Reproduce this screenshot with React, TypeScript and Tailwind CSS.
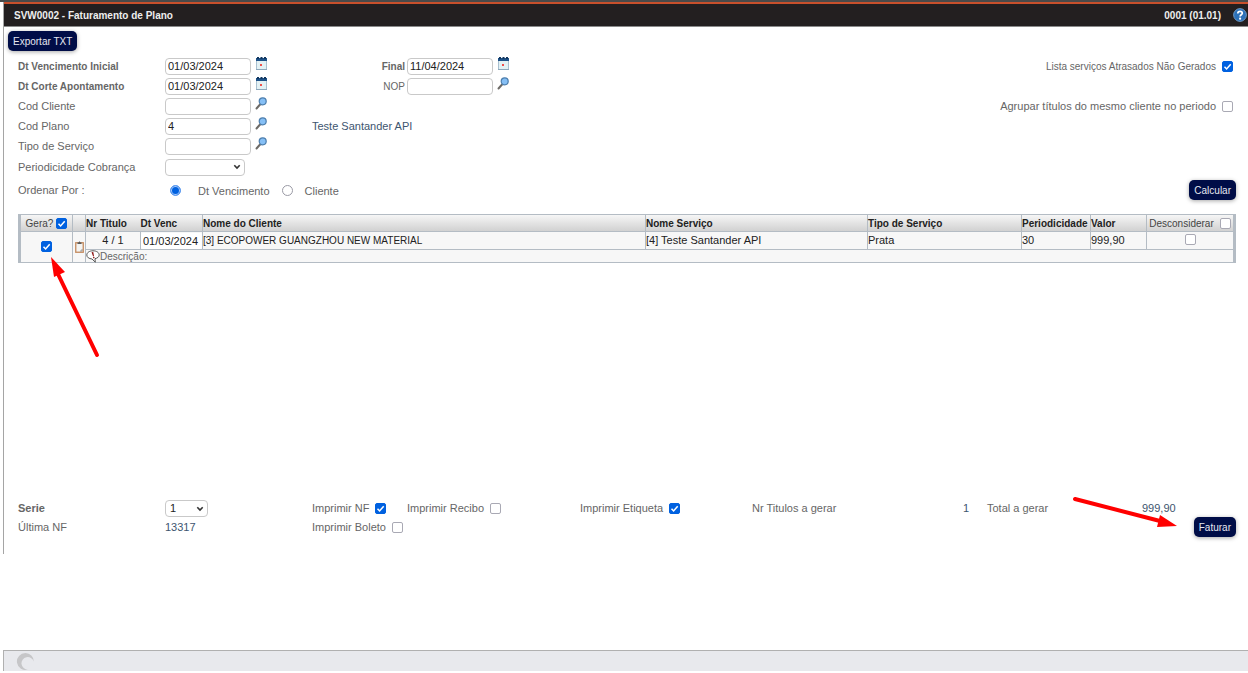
import { useState } from "react";
import type { ReactNode } from "react";

interface Titulo {
  id: string;
  numero: string;
  vencimento: string;
  cliente: string;
  servico: string;
  tipo: string;
  periodicidade: string;
  valor: string;
}

const titulos: Titulo[] = [
  {
    id: "4-1",
    numero: "4 / 1",
    vencimento: "01/03/2024",
    cliente: "[3] ECOPOWER GUANGZHOU NEW MATERIAL",
    servico: "[4] Teste Santander API",
    tipo: "Prata",
    periodicidade: "30",
    valor: "999,90",
  },
];

function CalendarIcon() {
  return (
    <svg width="13" height="14" viewBox="0 0 13 14">
      <rect x="1.500" y="2.500" width="10" height="10" fill="#e3f1f4" stroke="#a9c0d0" />
      <rect x="1" y="1" width="11" height="3" fill="#1d5086" />
      <path d="M2 0h2v2H2zM5.500 0h2v2h-2zM9 0h2v2H9z" fill="#12375f" />
      <path d="M1 12.500h11" stroke="#8da7bb" />
      <rect x="5" y="7" width="2" height="2" fill="#f0504c" />
    </svg>
  );
}

function SearchIcon() {
  return (
    <svg width="13" height="13" viewBox="0 0 13 13">
      <path d="M1.500 11.500L5.500 7" stroke="#6d6a66" strokeWidth="2" strokeLinecap="round" />
      <circle cx="7.700" cy="4.300" r="3.500" fill="#86bff5" stroke="#4d7fae" strokeWidth="1.200" />
    </svg>
  );
}

function HelpIcon() {
  return (
    <svg width="14" height="14" viewBox="0 0 14 14">
      <circle cx="7" cy="7" r="6.400" fill="#2b70b8" stroke="#7fa9d4" strokeWidth="0.800" />
      <path
        d="M4.800 5.400C4.800 2.600 9.300 2.700 9.300 5.200C9.300 6.700 7.100 6.800 7.100 8.500"
        fill="none"
        stroke="#fff"
        strokeWidth="1.700"
      />
      <circle cx="7.100" cy="10.700" r="1.100" fill="#fff" />
    </svg>
  );
}

function ClipboardIcon() {
  return (
    <svg width="9" height="12" viewBox="0 0 9 12">
      <rect x="0.750" y="1.750" width="7.500" height="9.500" fill="#f4f4f2" stroke="#c48a5e" strokeWidth="1.300" />
      <path d="M2.500 3V1.500h1L4.500 .3l1 1.200h1V3z" fill="#5a5a5a" />
      <path d="M6 11V9h2" fill="none" stroke="#888" strokeWidth="0.800" />
    </svg>
  );
}

function NoteIcon() {
  return (
    <svg width="14" height="13" viewBox="0 0 14 13">
      <path
        d="M7 .8C3.400.8.800 2.600.800 5C.800 7.300 3 8.700 6 9L9.300 12.200L9 8.700C11.500 8.100 13.200 6.800 13.200 5C13.200 2.600 10.600.8 7 .8Z"
        fill="#fff"
        stroke="#555"
        strokeWidth="1"
      />
      <path d="M5.500 2.200L7.300 2L8 6.200H7z" fill="#8e1616" />
      <circle cx="7.800" cy="7.600" r="0.800" fill="#8e1616" />
    </svg>
  );
}

function Check({ id, checked = false, label }: { id?: string; checked?: boolean; label?: string }) {
  const [on, setOn] = useState(checked);
  return (
    <span className="inline-grid size-[11px] shrink-0">
      <input
        id={id}
        type="checkbox"
        aria-label={label}
        checked={on}
        onChange={(e) => setOn(e.target.checked)}
        className="col-start-1 row-start-1 size-[11px] appearance-none rounded-xs border border-[#a9a9b4] bg-white checked:border-[#0061e0] checked:bg-[#0061e0]"
      />
      {on && (
        <svg viewBox="0 0 11 11" className="pointer-events-none col-start-1 row-start-1 size-[11px]">
          <path d="M2.500 5.700L4.600 7.900L8.700 3.200" fill="none" stroke="#fff" strokeWidth="1.500" />
        </svg>
      )}
    </span>
  );
}

function Select({ id, options, className }: { id: string; options: string[]; className: string }) {
  return (
    <span className={`inline-grid h-[17px] ${className}`}>
      <select
        id={id}
        className="col-start-1 row-start-1 h-[17px] w-full appearance-none rounded border border-[#c9c9c9] bg-white pl-1 text-[#222]"
      >
        {options.map((o) => (
          <option key={o}>{o}</option>
        ))}
      </select>
      <svg
        viewBox="0 0 8 6"
        className="pointer-events-none col-start-1 row-start-1 mr-1 h-[6px] w-2 self-center justify-self-end"
      >
        <path d="M1.300 1.200L4 4L6.700 1.200" fill="none" stroke="#333" strokeWidth="1.600" />
      </svg>
    </span>
  );
}

function Field({ id, value = "", icon }: { id: string; value?: string; icon: ReactNode }) {
  return (
    <span className="flex items-center gap-1">
      <input
        id={id}
        type="text"
        defaultValue={value}
        className="h-[17px] w-[86px] rounded border border-[#c9c9c9] bg-white px-[2px] text-[#222]"
      />
      <button type="button" aria-label="Selecionar" className="pb-[5px]">
        {icon}
      </button>
    </span>
  );
}

function Button({ children }: { children: ReactNode }) {
  return (
    <button
      type="button"
      className="h-5 rounded-[5px] bg-[#000d47] px-[5px] text-[10px] text-[#e6e8f0] shadow-[0_1px_4px_rgba(0,0,0,0.35)]"
    >
      {children}
    </button>
  );
}

const formRow = "grid h-5 grid-cols-[147px_147px_95px_1fr_auto] items-center";
const th = "border-[#b4bcc4] p-0 text-left text-[10px] font-bold";
const td = "border border-[#b4bcc4] p-0";

export default function App() {
  return (
    <main className="bg-white font-['Liberation_Sans',Arial,sans-serif] text-[11px] leading-[13px] text-[#666]">
      <div className="h-[2px] bg-[#4a4a4a]" />
      <div className="ml-[3px] border-l border-[#a5a5a5] pb-[17px]">
        <header className="flex h-[25px] items-center border-t-2 border-b border-t-[#c8502c] border-b-[#8a8a8a] bg-[#231f20] pr-px pl-[10px] text-[10px] font-bold text-[#eee]">
          <h1>SVW0002 - Faturamento de Plano</h1>
          <span className="mr-3 ml-auto">0001 (01.01)</span>
          <a href="#ajuda" aria-label="Ajuda">
            <HelpIcon />
          </a>
        </header>

        <div className="flex pt-1 pl-1">
          <Button>Exportar TXT</Button>
        </div>

        <form className="pt-[5px] pr-3 pl-[14px]">
          <div className={formRow}>
            <label htmlFor="dtIni" className="text-[10px] font-bold">Dt Vencimento Inicial</label>
            <Field id="dtIni" value="01/03/2024" icon={<CalendarIcon />} />
            <label htmlFor="dtFim" className="col-start-3 pr-[2px] text-right text-[10px] font-bold">Final</label>
            <Field id="dtFim" value="11/04/2024" icon={<CalendarIcon />} />
            <span className="flex items-center gap-[6px] pr-[3px]">
              <label htmlFor="atrasados" className="text-[10px]">Lista serviços Atrasados Não Gerados</label>
              <Check id="atrasados" checked />
            </span>
          </div>
          <div className={formRow}>
            <label htmlFor="dtCorte" className="text-[10px] font-bold">Dt Corte Apontamento</label>
            <Field id="dtCorte" value="01/03/2024" icon={<CalendarIcon />} />
            <label htmlFor="nop" className="pr-[2px] text-right text-[10px]">NOP</label>
            <Field id="nop" icon={<SearchIcon />} />
          </div>
          <div className={formRow}>
            <label htmlFor="cliente">Cod Cliente</label>
            <Field id="cliente" icon={<SearchIcon />} />
            <span className="col-start-5 flex items-center gap-[6px] pr-[3px]">
              <label htmlFor="agrupar">Agrupar títulos do mesmo cliente no periodo</label>
              <Check id="agrupar" />
            </span>
          </div>
          <div className={formRow}>
            <label htmlFor="plano">Cod Plano</label>
            <Field id="plano" value="4" icon={<SearchIcon />} />
            <output htmlFor="plano" className="whitespace-nowrap text-[#3d556f]">Teste Santander API</output>
          </div>
          <div className={formRow}>
            <label htmlFor="tipo">Tipo de Serviço</label>
            <Field id="tipo" icon={<SearchIcon />} />
          </div>
          <div className="grid h-[22px] grid-cols-[147px_1fr] items-center">
            <label htmlFor="periodicidade">Periodicidade Cobrança</label>
            <Select id="periodicidade" options={["", "Mensal", "Anual"]} className="w-20" />
          </div>
          <div className="grid h-6 grid-cols-[147px_1fr_auto] items-center">
            <span>Ordenar Por :</span>
            <div className="flex items-center pl-[5px]">
              <input
                id="ordVenc"
                type="radio"
                name="ordem"
                defaultChecked
                className="size-[11px] appearance-none rounded-full border border-[#9a9aa5] checked:border-[#5c9af0] checked:bg-[#0061e0] checked:shadow-[inset_0_0_0_1px_#a9cbfa]"
              />
              <label htmlFor="ordVenc" className="pt-[2px] pr-3 pl-[17px]">Dt Vencimento</label>
              <input
                id="ordCliente"
                type="radio"
                name="ordem"
                className="size-[11px] appearance-none rounded-full border border-[#9a9aa5] checked:border-[#5c9af0] checked:bg-[#0061e0] checked:shadow-[inset_0_0_0_1px_#a9cbfa]"
              />
              <label htmlFor="ordCliente" className="pt-[2px] pl-3">Cliente</label>
            </div>
            <Button>Calcular</Button>
          </div>

          <section className="relative mt-3 min-h-[286px]">
            <table className="w-full table-fixed border-collapse border-x-3 border-y border-[#b4bcc4] bg-[#f7f7f7] text-[#222]">
              <colgroup>
                <col className="w-[53px]" />
                <col className="w-[13px]" />
                <col className="w-[55px]" />
                <col className="w-[62px]" />
                <col />
                <col className="w-[222px]" />
                <col className="w-[154px]" />
                <col className="w-[69px]" />
                <col className="w-[56px]" />
                <col className="w-[88px]" />
              </colgroup>
              <thead>
                <tr className="h-[17px] bg-linear-to-b from-[#f6f6f6] to-[#cfcfcf] whitespace-nowrap">
                  <th className="border-r border-[#b4bcc4] p-0 text-[10px] font-normal text-[#444]">
                    <span className="flex items-center justify-center gap-[3px]">
                      Gera? <Check checked label="Gerar todos" />
                    </span>
                  </th>
                  <th className="border-r border-[#b4bcc4] p-0" />
                  <th className={th}>Nr Titulo</th>
                  <th className={th}>Dt Venc</th>
                  <th className={`${th} border-l`}>Nome do Cliente</th>
                  <th className={`${th} border-l`}>Nome Serviço</th>
                  <th className={`${th} border-l`}>Tipo de Serviço</th>
                  <th className={`${th} border-l`}>Periodicidade</th>
                  <th className={`${th} border-l`}>Valor</th>
                  <th className="border-l border-[#b4bcc4] p-0 text-[10px] font-normal text-[#444]">
                    <span className="flex items-center justify-center gap-[6px]">
                      Desconsiderar <Check label="Desconsiderar todos" />
                    </span>
                  </th>
                </tr>
              </thead>
              {titulos.map((t) => (
                <tbody key={t.id}>
                  <tr className="h-[18px]">
                    <td rowSpan={2} className={`${td} text-center leading-none`}>
                      <Check checked label="Gerar título" />
                    </td>
                    <td rowSpan={2} className={td}>
                      <button type="button" aria-label="Copiar" className="mx-auto block">
                        <ClipboardIcon />
                      </button>
                    </td>
                    <td className={`${td} text-center`}>{t.numero}</td>
                    <td className={td}>
                      <input
                        aria-label="Dt Venc"
                        defaultValue={t.vencimento}
                        className="block h-4 w-full rounded-xs bg-white pl-[2px]"
                      />
                    </td>
                    <td className={`${td} text-[10px]`}>{t.cliente}</td>
                    <td className={td}>{t.servico}</td>
                    <td className={td}>{t.tipo}</td>
                    <td className={td}>{t.periodicidade}</td>
                    <td className={td}>{t.valor}</td>
                    <td className={`${td} text-center leading-none`}>
                      <Check label="Desconsiderar" />
                    </td>
                  </tr>
                  <tr className="h-[13px]">
                    <td colSpan={8} className="border-t border-[#b4bcc4] p-0 text-[10px] text-[#666]">
                      <span className="flex h-3 items-center">
                        <NoteIcon />
                        Descrição:
                      </span>
                    </td>
                  </tr>
                </tbody>
              ))}
            </table>
            <svg className="pointer-events-none absolute top-[42px] left-[30px]" width="54" height="104" viewBox="0 0 54 104">
              <path d="M49 99L9 16" stroke="#f00" strokeWidth="4" strokeLinecap="round" />
              <path d="M3 1L17 16L6 21z" fill="#f00" />
            </svg>
          </section>

          <div className="relative grid grid-cols-[147px_147px_95px_173px_172px_1fr_155px_94px] items-center">
            <label htmlFor="serie" className="font-bold">Serie</label>
            <Select id="serie" options={["1", "2"]} className="w-[43px]" />
            <span className="flex items-center gap-[6px]">
              <label htmlFor="nf">Imprimir NF</label>
              <Check id="nf" checked />
            </span>
            <span className="flex items-center gap-[6px]">
              <label htmlFor="recibo">Imprimir Recibo</label>
              <Check id="recibo" />
            </span>
            <span className="flex items-center gap-[6px]">
              <label htmlFor="etiqueta">Imprimir Etiqueta</label>
              <Check id="etiqueta" checked />
            </span>
            <span className="flex justify-between pr-[18px]">
              Nr Titulos a gerar <span className="text-[#3d556f]">1</span>
            </span>
            <span>Total a gerar</span>
            <span className="text-[#3d556f]">999,90</span>

            <span>Última NF</span>
            <span className="text-[#3d556f]">13317</span>
            <span className="flex items-center gap-[6px] whitespace-nowrap">
              <label htmlFor="boleto">Imprimir Boleto</label>
              <Check id="boleto" />
            </span>
            <span className="col-start-8 flex justify-end">
              <Button>Faturar</Button>
            </span>
            <svg className="pointer-events-none absolute -top-1 right-[58px]" width="106" height="34" viewBox="0 0 106 34">
              <path d="M3 3L88 25" stroke="#f00" strokeWidth="4" strokeLinecap="round" />
              <path d="M105 30L88 19L85 31z" fill="#f00" />
            </svg>
          </div>
        </form>
      </div>

      <footer className="mt-24 ml-[3px] flex h-[21px] items-center border-t border-l border-[#b0b0b0] bg-[#e8e9ed] pl-3">
        <svg width="19" height="19" viewBox="0 0 19 19">
          <path d="M9.500 1A8.500 8.500 0 1 0 12 17.600A6.300 6.300 0 1 1 17.800 9.500A8.500 8.500 0 0 0 9.500 1Z" fill="#c6c6c8" />
        </svg>
      </footer>
    </main>
  );
}
